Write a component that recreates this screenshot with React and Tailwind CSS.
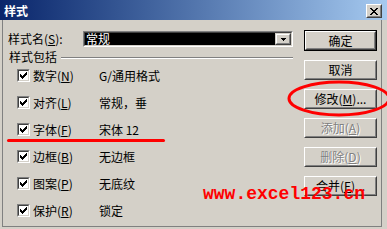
import React from "react";

const CHECK_COLS = [
  [0, 2], [1, 3], [2, 4], [3, 3], [4, 2], [5, 1], [6, 0],
];

function Check() {
  return (
    <div className="w-[13px] h-[13px] shrink-0 border border-t-[#808080] border-l-[#808080] border-r-white border-b-white">
      <div className="w-full h-full border border-t-[#404040] border-l-[#404040] border-r-[#d4d0c8] border-b-[#d4d0c8] bg-white">
        <svg width="9" height="9" viewBox="0 0 9 9" className="block" shapeRendering="crispEdges">
          {CHECK_COLS.map(([x, y]) => (
            <rect key={x} x={x + 1} y={y + 1} width="1" height="3" fill="#000" />
          ))}
        </svg>
      </div>
    </div>
  );
}

function Btn({ children, def, disabled }) {
  const inner = (
    <div className="h-full border border-t-white border-l-white border-r-[#404040] border-b-[#404040]">
      <div
        className={
          "h-full border border-t-[#d4d0c8] border-l-[#d4d0c8] border-r-[#808080] border-b-[#808080] flex items-center justify-center text-[12px] leading-none " +
          (disabled ? "text-[#808080] [text-shadow:1px_1px_0_#fff]" : "text-black")
        }
      >
        {children}
      </div>
    </div>
  );
  return def ? (
    <div className="h-[21px] border border-black">{inner}</div>
  ) : (
    <div className="h-[20px]">{inner}</div>
  );
}

const U = ({ children }) => <span className="underline underline-offset-1">{children}</span>;

const ROWS = [
  ["数字", "N", "G/通用格式"],
  ["对齐", "L", "常规，垂"],
  ["字体", "F", "宋体 12"],
  ["边框", "B", "无边框"],
  ["图案", "P", "无底纹"],
  ["保护", "R", "锁定"],
];

const X_PIX = [
  [0, 0], [1, 0], [6, 0], [7, 0],
  [1, 1], [2, 1], [5, 1], [6, 1],
  [2, 2], [3, 2], [4, 2], [5, 2],
  [3, 3], [4, 3],
  [2, 4], [3, 4], [4, 4], [5, 4],
  [1, 5], [2, 5], [5, 5], [6, 5],
  [0, 6], [1, 6], [6, 6], [7, 6],
];

export default function App() {
  return (
    <div className="relative w-[387px] h-[229px] overflow-hidden bg-[#d4d0c8] flex flex-col [font-family:'Noto_Sans_CJK_SC',sans-serif] text-[12px] text-black">
      {/* Title bar */}
      <div className="h-[20px] shrink-0 bg-linear-to-r from-[#0a246a] to-[#a6caf0] flex items-center justify-between pl-[4px] pr-[5px] pt-[2px]">
        <span className="text-white font-bold text-[12px] leading-none">样式</span>
        <div className="w-[16px] h-[14px] border border-t-white border-l-white border-r-[#404040] border-b-[#404040] bg-[#d4d0c8]">
          <div className="w-full h-full border border-t-[#d4d0c8] border-l-[#d4d0c8] border-r-[#808080] border-b-[#808080] flex items-center justify-center">
            <svg width="8" height="7" viewBox="0 0 8 7" shapeRendering="crispEdges" className="block">
              {X_PIX.map(([x, y], i) => (
                <rect key={i} x={x} y={y} width="1" height="1" fill="#000" />
              ))}
            </svg>
          </div>
        </div>
      </div>

      {/* Body */}
      <div className="flex-1 flex">
        <div className="ml-[2px] w-[380px] h-[207px] border-l border-r border-b border-[#808080] flex">
          {/* Left column */}
          <div className="w-[298px] flex flex-col">
            <div className="mt-[11px] h-[16px] flex items-center">
              <div className="w-[80px] pl-[5px] leading-none">
                样式名(<U>S</U>):
              </div>
              <div className="w-[210px] h-[16px] border border-t-[#808080] border-l-[#808080] border-r-white border-b-white">
                <div className="w-full h-full border border-t-[#404040] border-l-[#404040] border-r-[#d4d0c8] border-b-[#d4d0c8] bg-white flex">
                  <div className="flex-1 bg-black text-white leading-none flex items-center pl-[1px]">常规</div>
                  <div className="w-[16px] h-full border border-t-[#d4d0c8] border-l-[#d4d0c8] border-r-[#404040] border-b-[#404040] bg-[#d4d0c8]">
                    <div className="w-full h-full border border-t-white border-l-white border-r-[#808080] border-b-[#808080] flex items-center justify-center">
                      <svg width="5" height="3" viewBox="0 0 5 3" shapeRendering="crispEdges" className="block">
                        <rect x="0" y="0" width="5" height="1" fill="#000" />
                        <rect x="1" y="1" width="3" height="1" fill="#000" />
                        <rect x="2" y="2" width="1" height="1" fill="#000" />
                      </svg>
                    </div>
                  </div>
                </div>
              </div>
            </div>

            <div className="mt-[4px] h-[11px] flex items-center pl-[6px] pr-[8px]">
              <span className="leading-none">样式包括</span>
              <div className="flex-1 ml-[4px] mt-[2px] border-t border-t-[#808080] border-b border-b-white" />
            </div>

            <div className="flex flex-col">
              {ROWS.map(([label, key, val]) => (
                <div key={label} className="h-[27px] flex items-center pl-[14px]">
                  <Check />
                  <div className="w-[66px] ml-[3px] leading-none">
                    {label}(<U>{key}</U>)
                  </div>
                  <div className="leading-none">{val}</div>
                </div>
              ))}
            </div>
          </div>

          {/* Right column */}
          <div className="ml-[3px] w-[73px] pt-[10px] flex flex-col gap-[9px]">
            <Btn def>确定</Btn>
            <Btn>取消</Btn>
            <Btn>
              修改(<U>M</U>)...
            </Btn>
            <Btn disabled>
              添加(<U>A</U>)
            </Btn>
            <Btn disabled>
              删除(<U>D</U>)
            </Btn>
            <Btn>
              合并(<U>E</U>)...
            </Btn>
          </div>
        </div>
      </div>

      {/* Annotations */}
      <div className="absolute left-[7px] top-[139px] w-[158px] h-[3px] rounded-full bg-[#ff0000]" />
      <svg className="absolute left-[286px] top-[79px]" width="110" height="40" viewBox="0 0 110 40">
        <ellipse cx="53" cy="19.5" rx="50" ry="16.5" fill="none" stroke="#ff0000" strokeWidth="3" />
      </svg>
      <div className="absolute left-[203px] top-[185px] text-[18px] leading-[18px] font-bold text-[#ff0000] [font-family:'Liberation_Mono',monospace] whitespace-nowrap">
        www.excel123.cn
      </div>
    </div>
  );
}
